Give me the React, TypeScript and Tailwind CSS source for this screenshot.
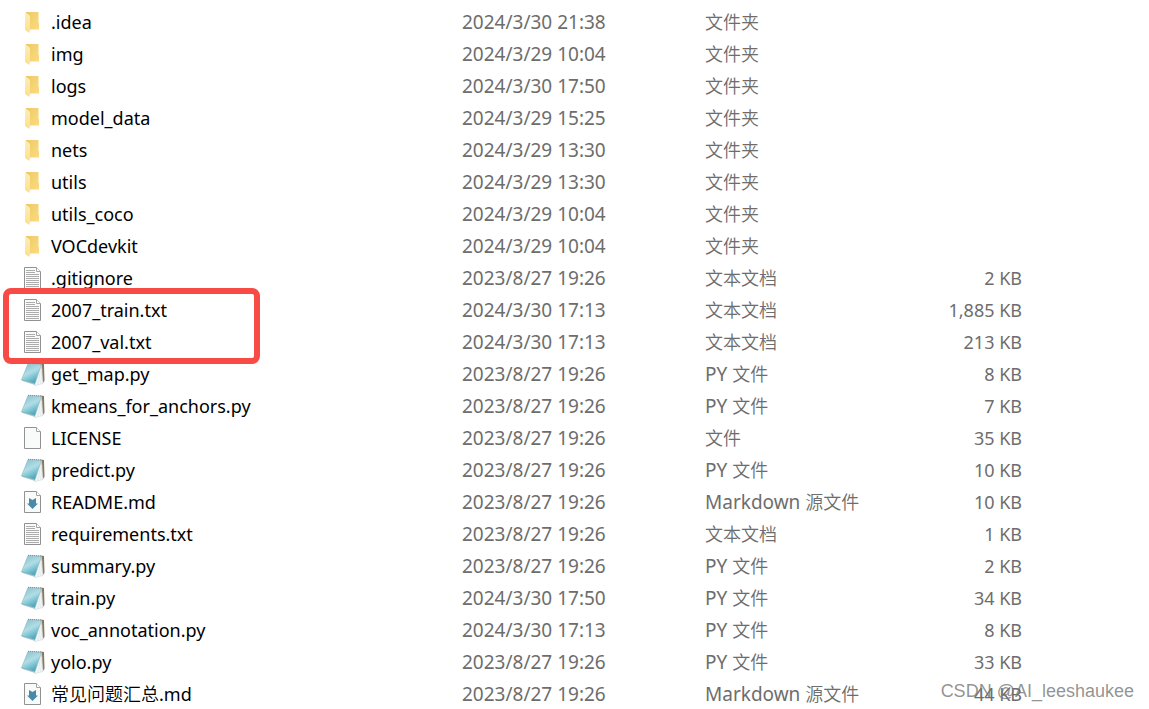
import React from 'react';

type FileKind = 'folder' | 'text' | 'python' | 'blank' | 'markdown';

interface FileEntry {
  name: string;
  kind: FileKind;
  modified: string;
  size?: string;
}

const files: FileEntry[] = [
  { name: '.idea', kind: 'folder', modified: '2024/3/30 21:38' },
  { name: 'img', kind: 'folder', modified: '2024/3/29 10:04' },
  { name: 'logs', kind: 'folder', modified: '2024/3/30 17:50' },
  { name: 'model_data', kind: 'folder', modified: '2024/3/29 15:25' },
  { name: 'nets', kind: 'folder', modified: '2024/3/29 13:30' },
  { name: 'utils', kind: 'folder', modified: '2024/3/29 13:30' },
  { name: 'utils_coco', kind: 'folder', modified: '2024/3/29 10:04' },
  { name: 'VOCdevkit', kind: 'folder', modified: '2024/3/29 10:04' },
  { name: '.gitignore', kind: 'text', modified: '2023/8/27 19:26', size: '2 KB' },
  { name: '2007_train.txt', kind: 'text', modified: '2024/3/30 17:13', size: '1,885 KB' },
  { name: '2007_val.txt', kind: 'text', modified: '2024/3/30 17:13', size: '213 KB' },
  { name: 'get_map.py', kind: 'python', modified: '2023/8/27 19:26', size: '8 KB' },
  { name: 'kmeans_for_anchors.py', kind: 'python', modified: '2023/8/27 19:26', size: '7 KB' },
  { name: 'LICENSE', kind: 'blank', modified: '2023/8/27 19:26', size: '35 KB' },
  { name: 'predict.py', kind: 'python', modified: '2023/8/27 19:26', size: '10 KB' },
  { name: 'README.md', kind: 'markdown', modified: '2023/8/27 19:26', size: '10 KB' },
  { name: 'requirements.txt', kind: 'text', modified: '2023/8/27 19:26', size: '1 KB' },
  { name: 'summary.py', kind: 'python', modified: '2023/8/27 19:26', size: '2 KB' },
  { name: 'train.py', kind: 'python', modified: '2024/3/30 17:50', size: '34 KB' },
  { name: 'voc_annotation.py', kind: 'python', modified: '2024/3/30 17:13', size: '8 KB' },
  { name: 'yolo.py', kind: 'python', modified: '2023/8/27 19:26', size: '33 KB' },
  { name: '常见问题汇总.md', kind: 'markdown', modified: '2023/8/27 19:26', size: '44 KB' },
];

const kindLabels: Record<FileKind, string> = {
  folder: '文件夹',
  text: '文本文档',
  python: 'PY 文件',
  blank: '文件',
  markdown: 'Markdown 源文件',
};

const FolderIcon: React.FC = () => (
  <>
    <path d="M5 2h12.500v11H18v6.500H5z" fill="url(#folder-back)" />
    <path d="M4 2l5 4v14l-1 3-4-3z" fill="url(#folder-front)" />
  </>
);

const PageIcon: React.FC<{ children?: React.ReactNode }> = ({ children }) => (
  <>
    <path d="M3.5 1.5h12l4 4v17h-16z" fill="#f9fafa" stroke="#929292" />
    <path d="M15.500 1.500v4h4" fill="#fff" stroke="#a5a5a5" />
    {children}
  </>
);

const NotebookIcon: React.FC = () => (
  <>
    <path d="M19.500 1.500l3.500.5.500 17-2 2.500z" fill="#8c7558" />
    <path d="M20.500 2.500L22 21.500 14 23.500l-1-3z" fill="#f3f7f8" stroke="#c5d0d4" strokeWidth=".5" />
    <path d="M20 5l-3 17M21 7l-1.500 15" stroke="#d5dfe3" strokeWidth=".5" />
    <path d="M.5 17L14 20.500v2.500L.8 18.800z" fill="#a9c4cb" />
    <path d="M7 1.500l13.500.500L14 21.500.5 17.800z" fill="url(#notebook-cover)" stroke="#7fb0bc" strokeWidth=".5" />
    <path d="M7 1.300l13.500.700" stroke="#7f8e93" strokeDasharray="1 1" />
  </>
);

const FileIcon: React.FC<{ kind: FileKind }> = ({ kind }) => (
  <svg viewBox="0 0 24 24" fill="none" className="w-6 h-6 shrink-0" aria-hidden="true">
    {kind === 'folder' && <FolderIcon />}
    {kind === 'python' && <NotebookIcon />}
    {kind === 'blank' && <PageIcon />}
    {kind === 'text' && (
      <PageIcon>
        <path
          d="M5 4.500h9M5 6.500h9M5 8.500h13M5 10.500h13M5 12.500h13M5 14.500h13M5 16.500h13M5 18.500h13M5 20.500h13"
          stroke="#adadad"
        />
      </PageIcon>
    )}
    {kind === 'markdown' && (
      <PageIcon>
        <path d="M8 8l3.500 2L15 8v5.500h2L11.500 19 6 13.500h2z" fill="#4a8aa6" />
      </PageIcon>
    )}
  </svg>
);

// Gradients shared by every icon in the list
const IconGradients: React.FC = () => (
  <svg className="absolute w-0 h-0" aria-hidden="true">
    <defs>
      <linearGradient id="folder-back" x1="0" y1="0" x2="1" y2="1">
        <stop offset="0" stopColor="#edc968" />
        <stop offset="1" stopColor="#fbdc7d" />
      </linearGradient>
      <linearGradient id="folder-front" x1="0" y1="0" x2="0" y2="1">
        <stop offset="0" stopColor="#fff0b8" />
        <stop offset="1" stopColor="#fbdf8c" />
      </linearGradient>
      <linearGradient id="notebook-cover" x1="0.2" y1="0" x2="0.7" y2="1">
        <stop offset="0" stopColor="#8fc0cc" />
        <stop offset=".45" stopColor="#b0dde6" />
        <stop offset="1" stopColor="#3a9db3" />
      </linearGradient>
    </defs>
  </svg>
);

// Chinese runs keep one size whatever the Latin text beside them uses
const MixedText: React.FC<{ text: string }> = ({ text }) => (
  <>
    {text.split(/([\u4e00-\u9fff]+)/).map((part, i) =>
      i % 2 === 1 ? (
        <span key={i} className="text-[18px] font-[350]">{part}</span>
      ) : (
        part
      ),
    )}
  </>
);

const App: React.FC = () => {
  return (
    <main className="relative h-screen overflow-hidden bg-white pt-1.5 font-['Noto_Sans','Noto_Sans_CJK_SC',sans-serif] text-[19px] leading-8 text-[#6d6d6d]">
      <IconGradients />

      <table className="w-full table-fixed border-collapse whitespace-nowrap" aria-label="Files">
        <colgroup>
          <col className="w-[462px]" />
          <col className="w-[243px]" />
          <col className="w-[197px]" />
          <col className="w-[120px]" />
          <col />
        </colgroup>
        <tbody>
          {files.map((file) => (
            <tr key={file.name} className="h-8">
              <td className="p-0 pl-[21px] text-[18px] text-black">
                <div className="flex h-8 items-center gap-1.5">
                  <FileIcon kind={file.kind} />
                  <span>
                    <MixedText text={file.name} />
                  </span>
                </div>
              </td>
              <td className="p-0">
                <div className="h-8">{file.modified}</div>
              </td>
              <td className="p-0">
                <div className="h-8">
                  <MixedText text={kindLabels[file.kind]} />
                </div>
              </td>
              <td className="p-0 text-right text-[18px]">
                <div className="h-8">{file.size}</div>
              </td>
              <td className="p-0" />
            </tr>
          ))}
        </tbody>
      </table>

      {/* Marker around the two generated lists */}
      <div className="pointer-events-none absolute left-[3px] top-[288px] h-[76px] w-[257px] rounded-lg border-6 border-[#f84b46]" />

      <div className="pointer-events-none absolute right-[15px] top-[679px] font-['Liberation_Sans',sans-serif] text-[18px] leading-6 text-[#777777]/80">
        CSDN @AI_leeshaukee
      </div>
    </main>
  );
};

export default App;
